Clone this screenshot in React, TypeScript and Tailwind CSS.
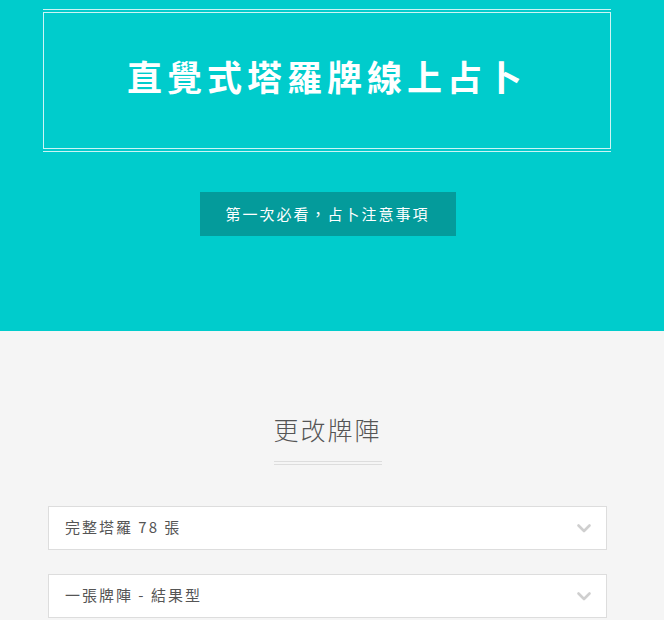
export default function App() {
  return (
    <div
      className="min-h-[620px] bg-[#f5f5f5]"
      style={{ fontFamily: '"Noto Sans CJK TC", "Noto Sans", sans-serif' }}
    >
      {/* hero */}
      <section className="h-[331px] bg-[#00cccc] pt-[9px]">
        <div className="ml-[43px] mr-[53px] border-y border-white/80 py-[2px]">
          <div className="flex h-[137px] items-center justify-center border border-white/80 pb-[8px]">
            <h1 className="text-[35px] font-bold tracking-[5px] text-white">
              直覺式塔羅牌線上占卜
            </h1>
          </div>
        </div>

        <div className="mt-[40px] flex justify-center pr-[9px]">
          <button className="h-[44px] w-[256px] bg-[#049b9b] text-[15px] tracking-[2px] text-white">
            第一次必看，占卜注意事項
          </button>
        </div>
      </section>

      {/* spread picker */}
      <section className="ml-[48px] mr-[57px] pt-[80px]">
        <div className="flex flex-col items-center">
          <h2 className="text-[25px] font-light tracking-[2px] text-[#555]">更改牌陣</h2>
          <div className="mt-[12px] w-[108px] border-y border-[#dddddd] pt-[2px]" />
        </div>

        <div className="mt-[41px] flex flex-col gap-[24px]">
          <Select label="完整塔羅 78 張" />
          <Select label="一張牌陣 - 結果型" />
        </div>
      </section>
    </div>
  )
}

function Select({ label }: { label: string }) {
  return (
    <div className="flex h-[44px] items-center justify-between border border-[#dddddd] bg-white pl-[16px] pr-[14px]">
      <span className="text-[15px] tracking-[2px] text-[#555]">{label}</span>
      <svg width="16" height="16" viewBox="0 0 16 16" fill="none">
        <path d="M2.5 5.5 8 11l5.5-5.5" stroke="#cfcfcf" strokeWidth="2.6" strokeLinecap="round" strokeLinejoin="round" />
      </svg>
    </div>
  )
}
